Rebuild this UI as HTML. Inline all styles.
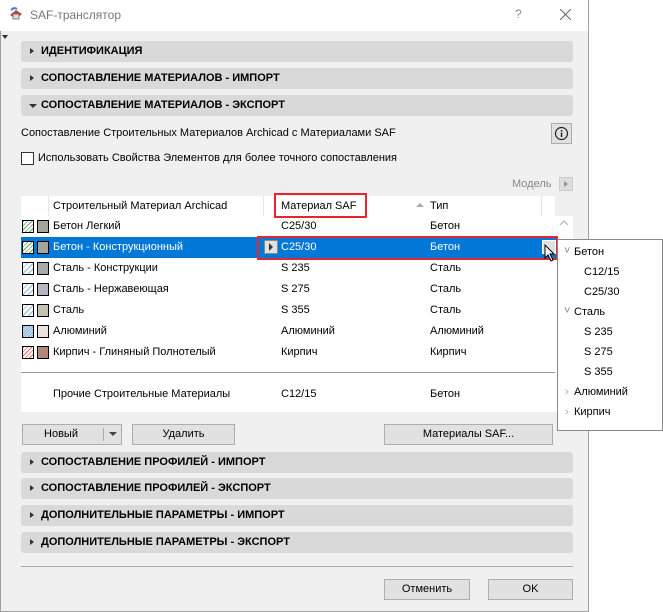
<!DOCTYPE html>
<html><head><meta charset="utf-8"><style>
*{box-sizing:border-box;margin:0;padding:0}
body{width:663px;height:612px;background:#fff;font-family:"Liberation Sans","DejaVu Sans",sans-serif;font-size:11px;color:#000;position:relative;overflow:hidden}
.a{position:absolute}
.win{left:0;top:0;width:589px;height:612px;border:1px solid #a0a0a0;border-top:none;background:#f0f0f0}
.title{left:0;top:0;width:588px;height:31px;background:#fff}
.bar{position:absolute;left:21px;width:552px;height:21px;background:#d9d9d9;border-radius:3px;font-weight:bold;font-size:11px;line-height:21px;padding-left:20px}
.bar:before{content:"";position:absolute;left:9px;top:7px;border-left:4px solid #333;border-top:3.5px solid transparent;border-bottom:3.5px solid transparent}
.bar.open:before{left:8px;top:9px;border-left:4px solid transparent;border-right:4px solid transparent;border-top:4px solid #333;border-bottom:none}
.btn{position:absolute;height:21px;background:#e1e1e1;border:1px solid #adadad;text-align:center;line-height:19px;font-size:11px}
.row{position:absolute;left:21px;width:534px;height:21px;line-height:21px;font-size:11px}
.row span{position:absolute}
.hat{position:absolute;left:1px;top:4px;width:12px;height:13px;border:1px solid #000}
.sw{position:absolute;left:16px;top:4px;width:12px;height:13px;border:1px solid #000}
.pop{left:557px;top:239px;width:106px;height:192px;background:#fff;border:1px solid #888;font-size:11px}
.pop div{position:absolute;line-height:14px}
</style></head><body>
<div class="a win"></div>
<div class="a title"></div>
<svg class="a" style="left:8px;top:6px" width="16" height="16" viewBox="0 0 16 16"><path d="M2 9 L8 4 L14 8 L8 13 Z" fill="#c84040"/><path d="M3 4 Q6 1 9 3" stroke="#4a7fc8" stroke-width="2" fill="none"/><rect x="5" y="8" width="6" height="5" fill="#ddd" stroke="#666" stroke-width=".8"/></svg>
<div class="a" style="left:30px;top:8px;font-size:12px;color:#777">SAF-транслятор</div>
<div class="a" style="left:515px;top:7px;font-size:12px;color:#888">?</div>
<svg class="a" style="left:560px;top:9px" width="11" height="11"><path d="M0 0L11 11M11 0L0 11" stroke="#666" stroke-width="1"/></svg>
<div class="a" style="left:2px;top:35px;border-left:3px solid transparent;border-right:3px solid transparent;border-top:4px solid #333"></div>

<div class="bar" style="top:41px">ИДЕНТИФИКАЦИЯ</div>
<div class="bar" style="top:68px">СОПОСТАВЛЕНИЕ МАТЕРИАЛОВ - ИМПОРТ</div>
<div class="bar open" style="top:95px">СОПОСТАВЛЕНИЕ МАТЕРИАЛОВ - ЭКСПОРТ</div>

<div class="a" style="left:21px;top:127px">Сопоставление Строительных Материалов Archicad с Материалами SAF</div>
<div class="a" style="left:551px;top:123px;width:21px;height:21px;border:1px solid #adadad;background:#e1e1e1"></div>
<svg class="a" style="left:554px;top:126px" width="15" height="15"><circle cx="7.5" cy="7.5" r="6" stroke="#222" stroke-width="1.2" fill="none"/><rect x="6.8" y="6.5" width="1.5" height="4.5" fill="#222"/><rect x="6.8" y="4" width="1.5" height="1.5" fill="#222"/></svg>
<div class="a" style="left:21px;top:152px;width:13px;height:13px;border:1px solid #333;background:#fff"></div>
<div class="a" style="left:38px;top:152px">Использовать Свойства Элементов для более точного сопоставления</div>
<div class="a" style="left:512px;top:178px;color:#888">Модель</div>
<div class="a" style="left:559px;top:177px;width:14px;height:14px;background:#ddd;border:1px solid #ccc"></div>
<div class="a" style="left:564px;top:181px;border-left:4px solid #999;border-top:3.5px solid transparent;border-bottom:3.5px solid transparent"></div>

<div class="a" style="left:21px;top:196px;width:552px;height:216px;background:#fff"></div>
<div class="a" style="left:555px;top:196px;width:18px;height:20px;background:#f0f0f0"></div>
<div class="a" style="left:48px;top:196px;width:1px;height:20px;background:#e5e5e5"></div>
<div class="a" style="left:263px;top:196px;width:1px;height:20px;background:#e5e5e5"></div>
<div class="a" style="left:541px;top:196px;width:1px;height:20px;background:#e5e5e5"></div>
<div class="a" style="left:53px;top:200px">Строительный Материал Archicad</div>
<div class="a" style="left:281px;top:200px">Материал SAF</div>
<div class="a" style="left:416px;top:203px;border-left:4px solid transparent;border-right:4px solid transparent;border-bottom:4px solid #aaa"></div>
<div class="a" style="left:430px;top:200px">Тип</div>
<div class="a" style="left:274px;top:193px;width:93px;height:25px;border:2px solid #e8242c"></div>
<svg class="a" style="left:559px;top:220px" width="10" height="6"><path d="M1 5L5 1L9 5" stroke="#bbb" fill="none" stroke-width="1.3"/></svg>

<div class="row" style="top:216px"><div class="hat" style="background:repeating-linear-gradient(-45deg,#fff 0 2px,#6a6 2px 3px)"></div><div class="sw" style="background:#a5a59b"></div><span style="left:32px">Бетон Легкий</span><span style="left:260px">C25/30</span><span style="left:409px">Бетон</span></div>
<div class="row" style="top:237px;background:#0078d7;color:#fff;left:21px;width:536px"><div class="hat" style="background:repeating-linear-gradient(-45deg,#fff 0 2px,#6a6 2px 3px)"></div><div class="sw" style="background:#a5a59b"></div><span style="left:32px">Бетон - Конструкционный</span><span style="left:260px">C25/30</span><span style="left:409px">Бетон</span></div>
<div class="a" style="left:264px;top:240px;width:14px;height:14px;background:#e1e1e1;border:1px solid #888"></div>
<div class="a" style="left:269px;top:243px;border-left:4px solid #333;border-top:4px solid transparent;border-bottom:4px solid transparent"></div>
<div class="a" style="left:542px;top:240px;width:14px;height:14px;background:#e1e1e1;border:1px solid #fff"></div>
<div class="a" style="left:257px;top:236px;width:301px;height:24px;border:2px solid #e8242c"></div>
<svg class="a" style="left:544px;top:244px" width="12" height="19"><path d="M1 1L1 14L4 11L7 17L9 16L6 10L10 10Z" fill="#fff" stroke="#000" stroke-width="1"/></svg>
<div class="row" style="top:258px"><div class="hat" style="background:repeating-linear-gradient(-45deg,#fff 0 3px,#8bd 3px 4px)"></div><div class="sw" style="background:#a8a8a8"></div><span style="left:32px">Сталь - Конструкции</span><span style="left:260px">S 235</span><span style="left:409px">Сталь</span></div>
<div class="row" style="top:279px"><div class="hat" style="background:repeating-linear-gradient(-45deg,#fff 0 3px,#8bd 3px 4px)"></div><div class="sw" style="background:#b4b4c2"></div><span style="left:32px">Сталь - Нержавеющая</span><span style="left:260px">S 275</span><span style="left:409px">Сталь</span></div>
<div class="row" style="top:300px"><div class="hat" style="background:repeating-linear-gradient(-45deg,#fff 0 3px,#8bd 3px 4px)"></div><div class="sw" style="background:#c8c0b2"></div><span style="left:32px">Сталь</span><span style="left:260px">S 355</span><span style="left:409px">Сталь</span></div>
<div class="row" style="top:321px"><div class="hat" style="background:repeating-linear-gradient(-45deg,#dfe9f7 0 1px,#7ad 1px 2px)"></div><div class="sw" style="background:#ebe2e2"></div><span style="left:32px">Алюминий</span><span style="left:260px">Алюминий</span><span style="left:409px">Алюминий</span></div>
<div class="row" style="top:342px"><div class="hat" style="background:repeating-linear-gradient(-45deg,#fff 0 2px,#e66 2px 3px)"></div><div class="sw" style="background:#b48878"></div><span style="left:32px">Кирпич - Глиняный Полнотелый</span><span style="left:260px">Кирпич</span><span style="left:409px">Кирпич</span></div>
<div class="a" style="left:21px;top:372px;width:534px;height:1px;background:#999"></div>
<div class="a" style="left:53px;top:388px">Прочие Строительные Материалы</div>
<div class="a" style="left:281px;top:388px">C12/15</div>
<div class="a" style="left:430px;top:388px">Бетон</div>

<div class="btn" style="left:22px;top:424px;width:100px;padding-right:22px">Новый</div>
<div class="a" style="left:103px;top:428px;width:1px;height:13px;background:#aaa"></div>
<div class="a" style="left:109px;top:432px;border-left:4px solid transparent;border-right:4px solid transparent;border-top:4px solid #444"></div>
<div class="btn" style="left:132px;top:424px;width:103px">Удалить</div>
<div class="btn" style="left:384px;top:424px;width:169px">Материалы SAF...</div>

<div class="bar" style="top:452px">СОПОСТАВЛЕНИЕ ПРОФИЛЕЙ - ИМПОРТ</div>
<div class="bar" style="top:478px">СОПОСТАВЛЕНИЕ ПРОФИЛЕЙ - ЭКСПОРТ</div>
<div class="bar" style="top:505px">ДОПОЛНИТЕЛЬНЫЕ ПАРАМЕТРЫ - ИМПОРТ</div>
<div class="bar" style="top:532px">ДОПОЛНИТЕЛЬНЫЕ ПАРАМЕТРЫ - ЭКСПОРТ</div>
<div class="a" style="left:21px;top:566px;width:552px;height:1px;background:#aaa"></div>
<div class="btn" style="left:384px;top:579px;width:86px">Отменить</div>
<div class="btn" style="left:488px;top:579px;width:85px">OK</div>

<div class="a pop">
<div style="left:6px;top:4px;color:#888">˅</div><div style="left:16px;top:5px">Бетон</div>
<div style="left:26px;top:25px">C12/15</div>
<div style="left:26px;top:45px">C25/30</div>
<div style="left:6px;top:64px;color:#888">˅</div><div style="left:16px;top:65px">Сталь</div>
<div style="left:26px;top:85px">S 235</div>
<div style="left:26px;top:105px">S 275</div>
<div style="left:26px;top:125px">S 355</div>
<div style="left:7px;top:145px;color:#aaa">›</div><div style="left:16px;top:145px">Алюминий</div>
<div style="left:7px;top:165px;color:#aaa">›</div><div style="left:16px;top:165px">Кирпич</div>
</div>
</body></html>
